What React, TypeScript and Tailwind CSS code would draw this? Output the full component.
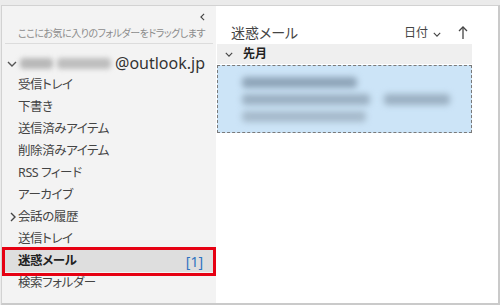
const folders = [
  { name: "受信トレイ" },
  { name: "下書き" },
  { name: "送信済みアイテム" },
  { name: "削除済みアイテム" },
  { name: "RSS フィード" },
  { name: "アーカイブ" },
  { name: "会話の履歴", collapsed: true },
  { name: "送信トレイ" },
  { name: "迷惑メール", selected: true, count: 1 },
  { name: "検索フォルダー" },
];

function Chevron({ dir, className }: { dir: "down" | "right" | "left"; className?: string }) {
  const points =
    dir === "down" ? "1,1 5,5 9,1" : dir === "right" ? "1,1 5,5 1,9" : "5,1 1,5 5,9";
  const w = dir === "down" ? 10 : 6;
  const h = dir === "down" ? 6 : 10;
  return (
    <svg width={w} height={h} viewBox={`0 0 ${w} ${h}`} className={className}>
      <polyline points={points} fill="none" stroke="currentColor" strokeWidth="1.4" />
    </svg>
  );
}

function FolderPane() {
  return (
    <div className="w-[214px] shrink-0 bg-[#f3f3f3] flex flex-col">
      <div className="h-[20px] pt-[2px] flex items-center justify-end pr-[11px] text-[#444]">
        <Chevron dir="left" className="w-[5px] h-[8px]" />
      </div>
      <div className="h-[14px] leading-[14px] pl-[16px] text-[10px] tracking-[-0.5px] text-[#8c8c8c] whitespace-nowrap">
        ここにお気に入りのフォルダーをドラッグします
      </div>
      <div className="mt-[3px] mx-[3px] h-px bg-[#dcdcdc]" />

      <div className="mt-[8px] h-[22px] flex items-center relative">
        <Chevron dir="down" className="absolute left-[5px] top-[9px] text-[#555]" />
        <div className="ml-[18px] flex items-center gap-[4px]">
          <div className="w-[33px] h-[11px] rounded-sm bg-[#b8b8b8] blur-[2.5px]" />
          <div className="w-[54px] h-[11px] rounded-sm bg-[#bebebe] blur-[2.5px]" />
        </div>
        <span className="ml-[4px] text-[16px] leading-[22px] text-[#333]">@outlook.jp</span>
      </div>

      <ul className="flex flex-col">
        {folders.map((f) => (
          <li
            key={f.name}
            className={
              "relative h-[22px] flex items-center pl-[16px] pr-[13px] text-[12.5px] tracking-[-0.4px] " +
              (f.selected ? "bg-[#dedede] font-bold text-[#222]" : "text-[#444]")
            }
          >
            {f.collapsed && (
              <Chevron dir="right" className="absolute left-[8px] top-[6px] text-[#444]" />
            )}
            <span className="flex-1">{f.name}</span>
            {f.count !== undefined && (
              <span className="font-normal text-[14px] tracking-normal text-[#2f74c0]">[{f.count}]</span>
            )}
            {f.selected && (
              <div className="absolute left-0 right-0 top-[-3px] bottom-[-4px] border-[3px] border-[#e60012]" />
            )}
          </li>
        ))}
      </ul>
    </div>
  );
}

function MessagePane() {
  return (
    <div className="flex-1 bg-white flex flex-col">
      <div className="ml-[1px] w-[255px]">
        <div className="h-[38px] flex items-end pb-[2px] pl-[14px] pr-[4px]">
          <span className="flex-1 text-[14px] leading-[18px] text-[#444]">迷惑メール</span>
          <span className="text-[12px] leading-[18px] text-[#444]">日付</span>
          <Chevron dir="down" className="ml-[5px] mb-[5px] w-[8px] h-[5px] text-[#444]" />
          <svg width="10" height="13" viewBox="0 0 10 13" className="ml-[17px] mb-[3px] text-[#444]">
            <polyline points="1,5 5,1 9,5" fill="none" stroke="currentColor" strokeWidth="1.3" />
            <line x1="5" y1="1" x2="5" y2="13" stroke="currentColor" strokeWidth="1.3" />
          </svg>
        </div>
        <div className="h-[20px] bg-[#efefef] flex items-center pl-[8px]">
          <Chevron dir="down" className="w-[8px] h-[5px] text-[#444]" />
          <span className="ml-[10px] text-[12px] font-bold text-[#222]">先月</span>
        </div>
        <div className="mt-px h-[68px] bg-[#cce4f7] border border-dashed border-[#7a7a7a] flex flex-col justify-center gap-[6px] pl-[24px]">
          <div className="w-[115px] h-[11px] rounded bg-[#8ea4b8] blur-[3px]" />
          <div className="flex gap-[14px]">
            <div className="w-[128px] h-[11px] rounded bg-[#9bb0c2] blur-[3px]" />
            <div className="w-[66px] h-[11px] rounded bg-[#9bb0c2] blur-[3px]" />
          </div>
          <div className="w-[124px] h-[11px] rounded bg-[#a6bacb] blur-[3px]" />
        </div>
      </div>
    </div>
  );
}

export default function App() {
  return (
    <div className="w-[500px] h-[305px] bg-[#ebebeb] pt-[5px] pl-[1px] font-['Noto_Sans','Noto_Sans_CJK_JP',sans-serif] [font-feature-settings:'palt']">
      <div className="h-full flex border-t border-l border-[#d2d2d2] border-r-2 border-b-2 border-r-[#cacaca] border-b-[#cacaca] overflow-hidden">
        <FolderPane />
        <MessagePane />
      </div>
    </div>
  );
}
